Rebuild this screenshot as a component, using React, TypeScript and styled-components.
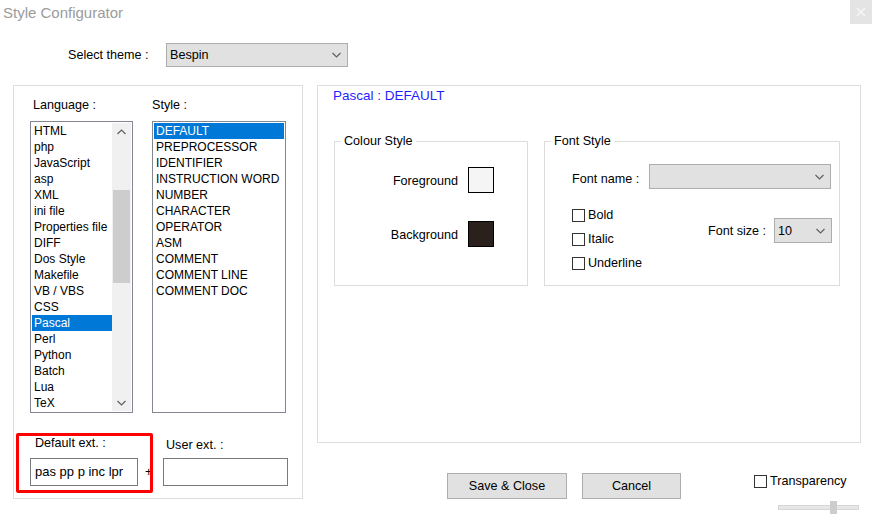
import React from "react";
import styled, { createGlobalStyle } from "styled-components";

const GlobalStyle = createGlobalStyle`
    html, body {
        margin: 0;
        padding: 0;
        background: #ffffff;
    }
    body {
        font-family: "Liberation Sans", Arial, sans-serif;
        font-size: 12.6px;
        color: #000000;
    }
`;

const languages = [
    "HTML",
    "php",
    "JavaScript",
    "asp",
    "XML",
    "ini file",
    "Properties file",
    "DIFF",
    "Dos Style",
    "Makefile",
    "VB / VBS",
    "CSS",
    "Pascal",
    "Perl",
    "Python",
    "Batch",
    "Lua",
    "TeX",
];

const styles = [
    "DEFAULT",
    "PREPROCESSOR",
    "IDENTIFIER",
    "INSTRUCTION WORD",
    "NUMBER",
    "CHARACTER",
    "OPERATOR",
    "ASM",
    "COMMENT",
    "COMMENT LINE",
    "COMMENT DOC",
];

const Chevron: React.FC<{ up?: boolean; color?: string }> = ({ up, color }) => (
    <svg width="9" height="6" viewBox="0 0 9 6">
        <polyline
            points={up ? "0.5,5 4.5,1 8.5,5" : "0.5,1 4.5,5 8.5,1"}
            fill="none"
            stroke={color ?? "#606060"}
            strokeWidth="1.2"
        />
    </svg>
);

export default function App() {
    return (
        <>
            <GlobalStyle />
            <Window>
                <TitleBar>
                    <Title>Style Configurator</Title>
                    <CloseButton>
                        <svg width="10" height="10" viewBox="0 0 10 10">
                            <path
                                d="M1 1 L9 9 M9 1 L1 9"
                                stroke="#f7f7f7"
                                strokeWidth="1.6"
                            />
                        </svg>
                    </CloseButton>
                </TitleBar>

                <ThemeRow>
                    <FixedLabel $width={98}>Select theme :</FixedLabel>
                    <ComboBox $width={182} $height={24}>
                        <span>Bespin</span>
                        <Chevron />
                    </ComboBox>
                </ThemeRow>

                <Body>
                    <LeftGroup>
                        <ListsGrid>
                            <ColLabel $indent={3}>Language :</ColLabel>
                            <ColLabel>Style :</ColLabel>
                            <ListBox>
                                <Items>
                                    {languages.map((lang) => (
                                        <Item
                                            key={lang}
                                            $selected={lang === "Pascal"}
                                        >
                                            {lang}
                                        </Item>
                                    ))}
                                </Items>
                                <ScrollBar>
                                    <ScrollArrow>
                                        <Chevron up color="#606060" />
                                    </ScrollArrow>
                                    <ScrollTrack>
                                        <ScrollThumb />
                                    </ScrollTrack>
                                    <ScrollArrow>
                                        <Chevron color="#606060" />
                                    </ScrollArrow>
                                </ScrollBar>
                            </ListBox>
                            <ListBox>
                                <Items>
                                    {styles.map((s) => (
                                        <Item
                                            key={s}
                                            $selected={s === "DEFAULT"}
                                        >
                                            {s}
                                        </Item>
                                    ))}
                                </Items>
                            </ListBox>
                        </ListsGrid>

                        <ExtGrid>
                            <ColLabel $indent={5}>Default ext. :</ColLabel>
                            <span />
                            <ColLabel $indent={3} $shift={2}>
                                User ext. :
                            </ColLabel>
                            <TextInput>pas pp p inc lpr</TextInput>
                            <Plus>+</Plus>
                            <TextInput />
                        </ExtGrid>

                        <Highlight />
                    </LeftGroup>

                    <RightColumn>
                        <StylePanel>
                            <StyleTitle>Pascal : DEFAULT</StyleTitle>
                            <GroupsRow>
                                <GroupBox $width={194}>
                                    <Legend>Colour Style</Legend>
                                    <ColourGrid>
                                        <RightLabel>Foreground</RightLabel>
                                        <Swatch $color="#f5f5f5" />
                                        <RightLabel>Background</RightLabel>
                                        <Swatch $color="#2b211c" />
                                    </ColourGrid>
                                </GroupBox>
                                <GroupBox $width={296}>
                                    <Legend>Font Style</Legend>
                                    <FontBody>
                                        <FontNameRow>
                                            <FixedLabel $width={77} $shift={2}>
                                                Font name :
                                            </FixedLabel>
                                            <ComboBox $width={182} $height={25}>
                                                <span />
                                                <Chevron />
                                            </ComboBox>
                                        </FontNameRow>
                                        <FontOptionsRow>
                                            <CheckColumn>
                                                <CheckRow>
                                                    <CheckBox />
                                                    Bold
                                                </CheckRow>
                                                <CheckRow>
                                                    <CheckBox />
                                                    Italic
                                                </CheckRow>
                                                <CheckRow>
                                                    <CheckBox />
                                                    Underline
                                                </CheckRow>
                                            </CheckColumn>
                                            <FontSizeRow>
                                                <FixedLabel $width={66}>
                                                    Font size :
                                                </FixedLabel>
                                                <ComboBox
                                                    $width={58}
                                                    $height={25}
                                                >
                                                    <span>10</span>
                                                    <Chevron />
                                                </ComboBox>
                                            </FontSizeRow>
                                        </FontOptionsRow>
                                    </FontBody>
                                </GroupBox>
                            </GroupsRow>
                        </StylePanel>

                        <BottomRow>
                            <PushButton $width={120}>Save &amp; Close</PushButton>
                            <PushButton $width={99}>Cancel</PushButton>
                            <TransparencyBlock>
                                <CheckRow>
                                    <CheckBox />
                                    Transparency
                                </CheckRow>
                                <SliderTrack>
                                    <SliderThumb />
                                </SliderTrack>
                            </TransparencyBlock>
                        </BottomRow>
                    </RightColumn>
                </Body>
            </Window>
        </>
    );
}

const Window = styled.div`
    width: 872px;
    height: 520px;
    overflow: hidden;
    background: #ffffff;
`;

const TitleBar = styled.div`
    display: flex;
    justify-content: space-between;
    height: 26px;
`;

const Title = styled.div`
    padding-left: 3px;
    font-size: 15px;
    line-height: 26px;
    color: #9b9b9b;
`;

const CloseButton = styled.div`
    width: 22px;
    height: 24px;
    background: #e4e4e4;
    display: flex;
    align-items: center;
    justify-content: center;
`;

const ThemeRow = styled.div`
    display: flex;
    align-items: center;
    margin-top: 17px;
    padding-left: 68px;
`;

const ComboBox = styled.div<{ $width: number; $height: number }>`
    box-sizing: border-box;
    width: ${({ $width }) => $width}px;
    height: ${({ $height }) => $height}px;
    background: #e1e1e1;
    border: 1px solid #adadad;
    display: flex;
    align-items: center;
    justify-content: space-between;
    padding: 0 6px 0 3px;
`;

const Body = styled.div`
    display: flex;
    margin-top: 18px;
    padding-left: 13px;
    gap: 14px;
`;

const LeftGroup = styled.div`
    position: relative;
    box-sizing: border-box;
    width: 290px;
    height: 414px;
    border: 1px solid #dcdcdc;
    padding: 11px 0 0 16px;
`;

const ListsGrid = styled.div`
    display: grid;
    grid-template-columns: 103px 134px;
    column-gap: 19px;
    row-gap: 8px;
`;

const ColLabel = styled.div<{ $indent?: number; $shift?: number }>`
    line-height: 16px;
    white-space: nowrap;
    padding-left: ${({ $indent }) => $indent ?? 0}px;
    margin-top: ${({ $shift }) => $shift ?? 0}px;
`;

const ListBox = styled.div`
    box-sizing: border-box;
    height: 292px;
    border: 1px solid #828790;
    padding: 1px;
    display: flex;
    overflow: hidden;
`;

const Items = styled.div`
    flex: 1;
    min-width: 0;
    overflow: hidden;
    font-size: 12px;
`;

const Item = styled.div<{ $selected?: boolean }>`
    height: 16px;
    line-height: 16px;
    padding-left: 2px;
    white-space: nowrap;
    overflow: hidden;
    background: ${({ $selected }) => ($selected ? "#0078d7" : "transparent")};
    color: ${({ $selected }) => ($selected ? "#ffffff" : "#000000")};
`;

const ScrollBar = styled.div`
    width: 19px;
    background: #f0f0f0;
    display: flex;
    flex-direction: column;
`;

const ScrollArrow = styled.div`
    height: 17px;
    display: flex;
    align-items: center;
    justify-content: center;
`;

const ScrollTrack = styled.div`
    flex: 1;
    padding: 50px 1px 0;
`;

const ScrollThumb = styled.div`
    height: 93px;
    background: #cdcdcd;
`;

const ExtGrid = styled.div`
    display: grid;
    grid-template-columns: 108px 25px 125px;
    row-gap: 5px;
    margin-top: 22px;
`;

const TextInput = styled.div`
    box-sizing: border-box;
    height: 28px;
    border: 1px solid #7a7a7a;
    padding-left: 4px;
    line-height: 26px;
    font-size: 13px;
    white-space: nowrap;
    overflow: hidden;
`;

const Plus = styled.div`
    line-height: 28px;
    padding-left: 7px;
`;

const Highlight = styled.div`
    position: absolute;
    left: 2px;
    top: 347px;
    width: 137px;
    height: 60px;
    box-sizing: border-box;
    border: 3px solid #ff0000;
    border-radius: 2px;
`;

const RightColumn = styled.div`
    display: flex;
    flex-direction: column;
`;

const StylePanel = styled.div`
    box-sizing: border-box;
    width: 544px;
    height: 358px;
    border: 1px solid #dcdcdc;
    padding: 2px 0 0 15px;
`;

const StyleTitle = styled.div`
    font-size: 13.5px;
    line-height: 16px;
    color: #1f1fff;
`;

const GroupsRow = styled.div`
    display: flex;
    gap: 16px;
    margin-top: 37px;
    margin-left: 1px;
`;

const GroupBox = styled.div<{ $width: number }>`
    position: relative;
    box-sizing: border-box;
    width: ${({ $width }) => $width}px;
    height: 145px;
    border: 1px solid #dcdcdc;
`;

const Legend = styled.span`
    position: absolute;
    top: -9px;
    left: 6px;
    padding: 0 3px;
    background: #ffffff;
    line-height: 16px;
`;

const ColourGrid = styled.div`
    display: grid;
    grid-template-columns: 100px 26px;
    column-gap: 10px;
    row-gap: 28px;
    align-items: center;
    padding: 25px 0 0 23px;
`;

const RightLabel = styled.span`
    text-align: right;
    line-height: 16px;
    padding-top: 2px;
`;

const Swatch = styled.div<{ $color: string }>`
    box-sizing: border-box;
    width: 26px;
    height: 26px;
    border: 1px solid #000000;
    background: ${({ $color }) => $color};
`;

const FontBody = styled.div`
    padding: 22px 0 0 27px;
`;

const FontNameRow = styled.div`
    display: flex;
    align-items: center;
`;

const FixedLabel = styled.span<{ $width: number; $shift?: number }>`
    width: ${({ $width }) => $width}px;
    flex-shrink: 0;
    line-height: 16px;
    white-space: nowrap;
    padding-top: ${({ $shift }) => ($shift ?? 0) * 2}px;
`;

const FontOptionsRow = styled.div`
    display: flex;
    margin-top: 18px;
`;

const CheckColumn = styled.div`
    width: 136px;
    display: flex;
    flex-direction: column;
    gap: 8px;
`;

const CheckRow = styled.div`
    display: flex;
    align-items: center;
    line-height: 16px;
    white-space: nowrap;
`;

const CheckBox = styled.span`
    box-sizing: border-box;
    width: 13px;
    height: 13px;
    border: 1px solid #333333;
    background: #ffffff;
    margin-right: 3px;
`;

const FontSizeRow = styled.div`
    display: flex;
    align-items: center;
    margin-top: 11px;
    align-self: flex-start;
`;

const BottomRow = styled.div`
    display: flex;
    align-items: flex-start;
    margin-top: 30px;
    padding-left: 130px;
    gap: 15px;
`;

const PushButton = styled.div<{ $width: number }>`
    box-sizing: border-box;
    width: ${({ $width }) => $width}px;
    height: 26px;
    background: #e1e1e1;
    border: 1px solid #adadad;
    display: flex;
    align-items: center;
    justify-content: center;
`;

const TransparencyBlock = styled.div`
    margin-left: 58px;
    display: flex;
    flex-direction: column;
`;

const SliderTrack = styled.div`
    position: relative;
    box-sizing: border-box;
    width: 81px;
    height: 5px;
    margin: 16px 0 0 24px;
    background: #e7e7e7;
    border: 1px solid #d6d6d6;
`;

const SliderThumb = styled.div`
    position: absolute;
    left: 51px;
    top: -5px;
    width: 7px;
    height: 13px;
    background: #cdcdcd;
`;
